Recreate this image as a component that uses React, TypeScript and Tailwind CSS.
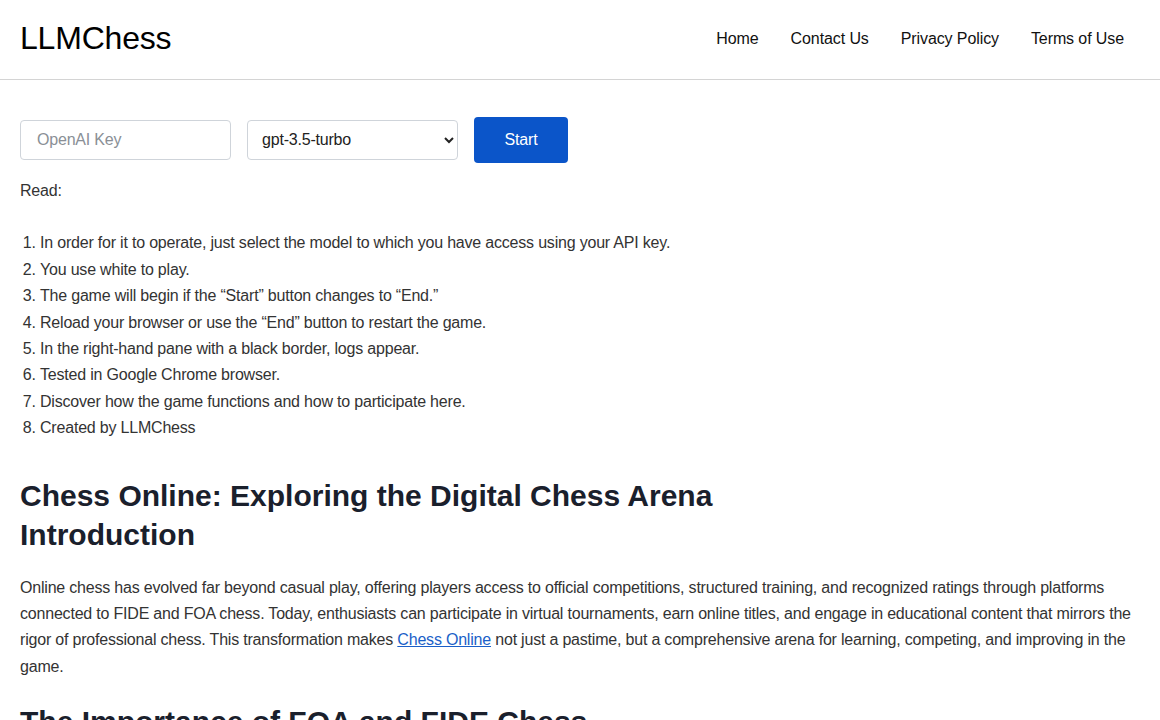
import React from "react";

const items = [
  "In order for it to operate, just select the model to which you have access using your API key.",
  "You use white to play.",
  "The game will begin if the \u201cStart\u201d button changes to \u201cEnd.\u201d",
  "Reload your browser or use the \u201cEnd\u201d button to restart the game.",
  "In the right-hand pane with a black border, logs appear.",
  "Tested in Google Chrome browser.",
  "Discover how the game functions and how to participate here.",
  "Created by LLMChess",
];

export default function App() {
  return (
    <div
      className="min-h-screen bg-white text-[#333]"
      style={{ fontFamily: '"Liberation Sans", Arial, sans-serif' }}
    >
      <header className="h-20 border-b border-[#d4d4d4] flex items-center justify-between pl-5 pr-5 pb-[2px]">
        <div className="text-[32px] leading-none text-black tracking-[-0.2px] mb-[1px]">LLMChess</div>
        <nav className="flex items-center text-[16px] text-[#111] tracking-[-0.1px]">
          <a className="px-4">Home</a>
          <a className="px-4">Contact Us</a>
          <a className="px-4">Privacy Policy</a>
          <a className="px-4">Terms of Use</a>
        </nav>
      </header>

      <main className="px-5 pt-[37px] text-[16px] leading-[26.4px] tracking-[-0.2px]">
        <div className="flex items-center gap-4">
          <input
            className="w-[211px] h-10 border border-[#cfd4da] rounded px-4 text-[16px] text-[#333] placeholder:text-[#8a8f96] outline-none tracking-[-0.2px]"
            placeholder="OpenAI Key"
          />
          <select className="w-[211px] h-10 border border-[#cfd4da] rounded pl-[10px] pr-2 pb-[1px] text-[16px] text-[#222] bg-white outline-none tracking-[-0.2px]">
            <option>gpt-3.5-turbo</option>
            <option>gpt-4</option>
          </select>
          <button className="w-[94px] h-[46px] rounded bg-[#0b55c9] text-white text-[16px]">Start</button>
        </div>

        <p className="mt-[15px]">Read:</p>
        <ol className="list-decimal pl-5 mt-[26px]">
          {items.map((t, i) => (
            <li key={i}>{t}</li>
          ))}
        </ol>

        <h2 className="mt-[34px] text-[30px] leading-[39px] font-bold text-[#1a202c] max-w-[760px] tracking-normal">
          Chess Online: Exploring the Digital Chess Arena Introduction
        </h2>
        <p className="mt-[21px]">
          Online chess has evolved far beyond casual play, offering players access to official competitions, structured training, and recognized ratings through platforms connected to FIDE and FOA chess. Today, enthusiasts can participate in virtual tournaments, earn online titles, and engage in educational content that mirrors the rigor of professional chess. This transformation makes{" "}
          <a className="text-[#1a5fc8] underline">Chess Online</a> not just a pastime, but a comprehensive arena for learning, competing, and improving in the game.
        </p>
        <h2 className="mt-[22px] text-[30px] leading-[39px] font-bold text-[#1a202c] tracking-normal">
          The Importance of FOA and FIDE Chess
        </h2>
        <p className="mt-[21px]">
          Both FOA and FIDE chess play a vital role in shaping the competitive landscape of online play.
        </p>
      </main>
    </div>
  );
}
